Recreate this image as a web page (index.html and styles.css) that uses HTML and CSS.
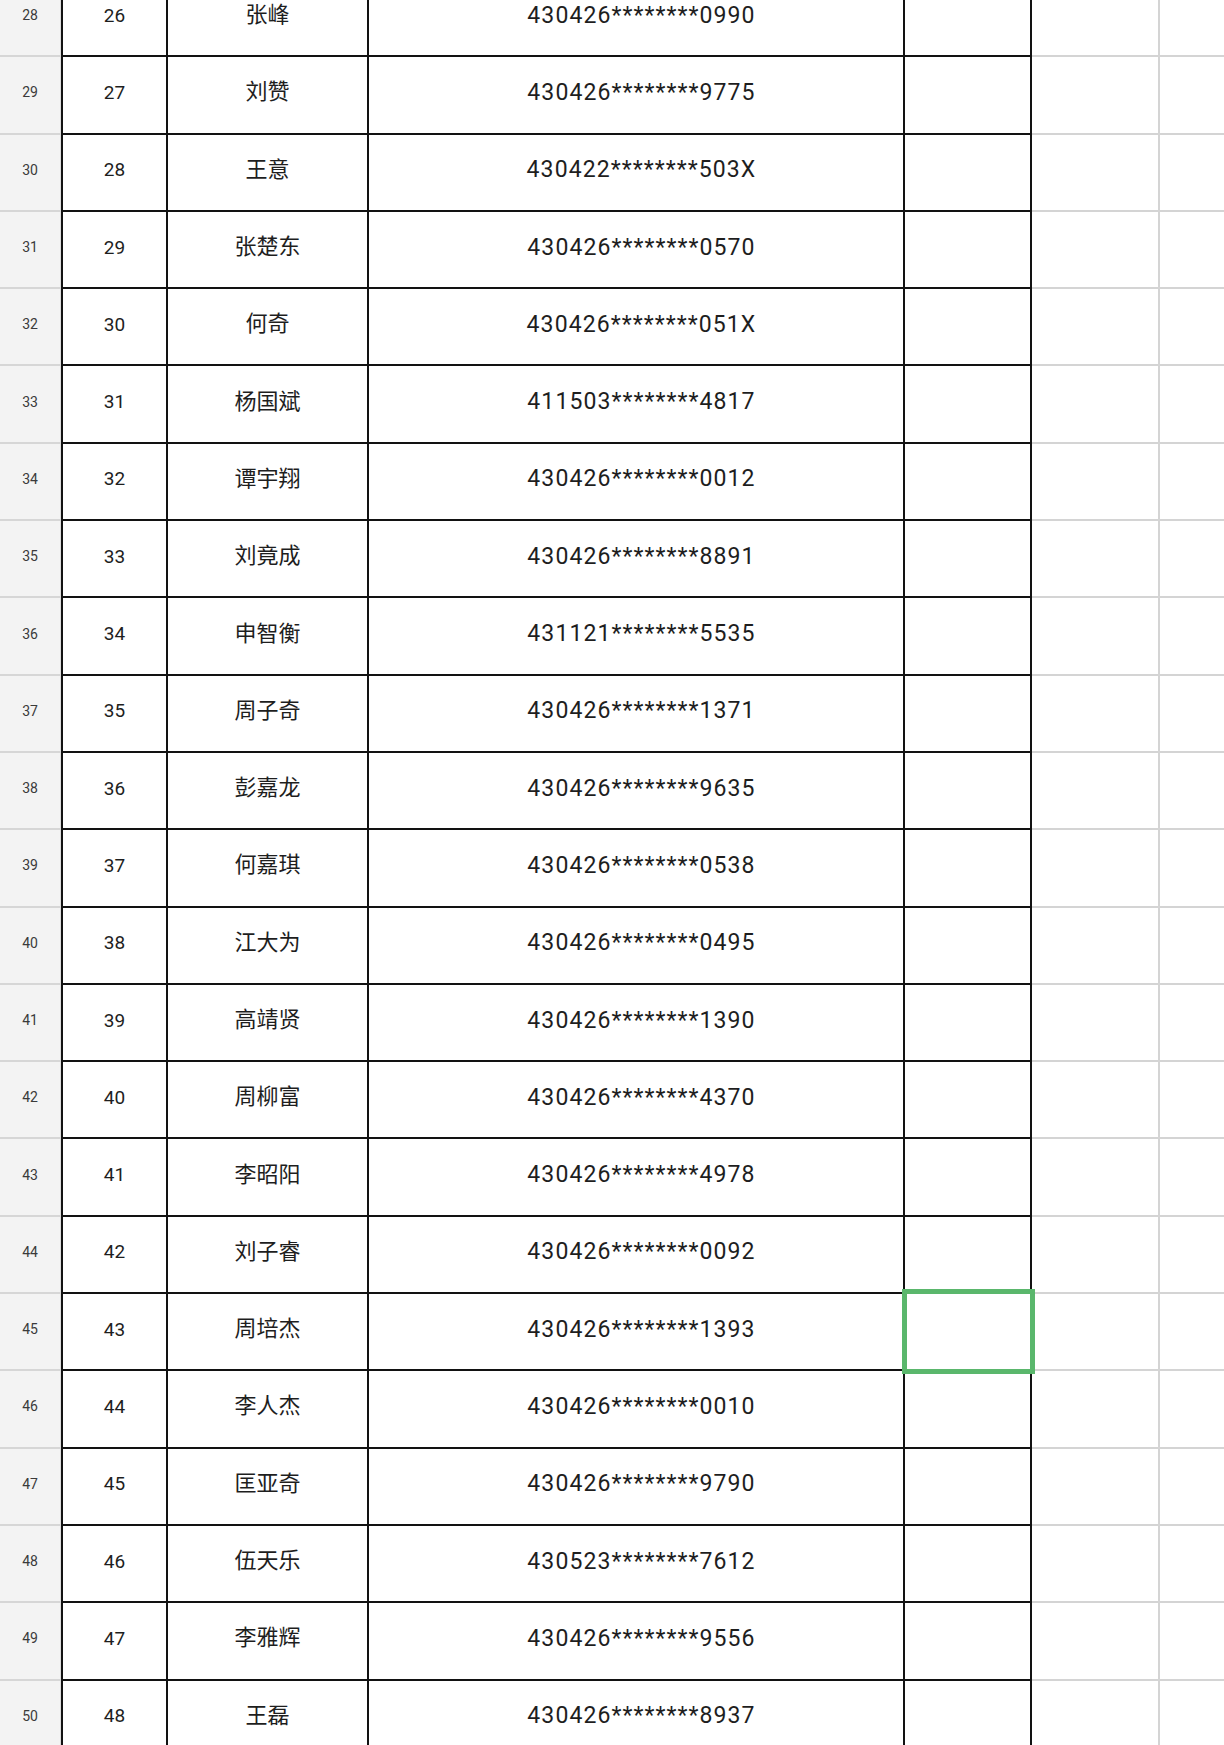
FILE: index.html
```html
<!DOCTYPE html>
<html lang="zh-CN">
<head>
<meta charset="utf-8">
<title>名单</title>
<link rel="stylesheet" href="styles.css">
</head>
<body>
<div class="sheet">
  <div class="row"><div class="rh">28</div><div class="c a">26</div><div class="c b">张峰</div><div class="c id">430426********0990</div><div class="c d"></div><div class="g e"></div><div class="g f"></div></div>
  <div class="row"><div class="rh">29</div><div class="c a">27</div><div class="c b">刘赞</div><div class="c id">430426********9775</div><div class="c d"></div><div class="g e"></div><div class="g f"></div></div>
  <div class="row"><div class="rh">30</div><div class="c a">28</div><div class="c b">王意</div><div class="c id">430422********503X</div><div class="c d"></div><div class="g e"></div><div class="g f"></div></div>
  <div class="row"><div class="rh">31</div><div class="c a">29</div><div class="c b">张楚东</div><div class="c id">430426********0570</div><div class="c d"></div><div class="g e"></div><div class="g f"></div></div>
  <div class="row"><div class="rh">32</div><div class="c a">30</div><div class="c b">何奇</div><div class="c id">430426********051X</div><div class="c d"></div><div class="g e"></div><div class="g f"></div></div>
  <div class="row"><div class="rh">33</div><div class="c a">31</div><div class="c b">杨国斌</div><div class="c id">411503********4817</div><div class="c d"></div><div class="g e"></div><div class="g f"></div></div>
  <div class="row"><div class="rh">34</div><div class="c a">32</div><div class="c b">谭宇翔</div><div class="c id">430426********0012</div><div class="c d"></div><div class="g e"></div><div class="g f"></div></div>
  <div class="row"><div class="rh">35</div><div class="c a">33</div><div class="c b">刘竟成</div><div class="c id">430426********8891</div><div class="c d"></div><div class="g e"></div><div class="g f"></div></div>
  <div class="row"><div class="rh">36</div><div class="c a">34</div><div class="c b">申智衡</div><div class="c id">431121********5535</div><div class="c d"></div><div class="g e"></div><div class="g f"></div></div>
  <div class="row"><div class="rh">37</div><div class="c a">35</div><div class="c b">周子奇</div><div class="c id">430426********1371</div><div class="c d"></div><div class="g e"></div><div class="g f"></div></div>
  <div class="row"><div class="rh">38</div><div class="c a">36</div><div class="c b">彭嘉龙</div><div class="c id">430426********9635</div><div class="c d"></div><div class="g e"></div><div class="g f"></div></div>
  <div class="row"><div class="rh">39</div><div class="c a">37</div><div class="c b">何嘉琪</div><div class="c id">430426********0538</div><div class="c d"></div><div class="g e"></div><div class="g f"></div></div>
  <div class="row"><div class="rh">40</div><div class="c a">38</div><div class="c b">江大为</div><div class="c id">430426********0495</div><div class="c d"></div><div class="g e"></div><div class="g f"></div></div>
  <div class="row"><div class="rh">41</div><div class="c a">39</div><div class="c b">高靖贤</div><div class="c id">430426********1390</div><div class="c d"></div><div class="g e"></div><div class="g f"></div></div>
  <div class="row"><div class="rh">42</div><div class="c a">40</div><div class="c b">周柳富</div><div class="c id">430426********4370</div><div class="c d"></div><div class="g e"></div><div class="g f"></div></div>
  <div class="row"><div class="rh">43</div><div class="c a">41</div><div class="c b">李昭阳</div><div class="c id">430426********4978</div><div class="c d"></div><div class="g e"></div><div class="g f"></div></div>
  <div class="row"><div class="rh">44</div><div class="c a">42</div><div class="c b">刘子睿</div><div class="c id">430426********0092</div><div class="c d"></div><div class="g e"></div><div class="g f"></div></div>
  <div class="row"><div class="rh">45</div><div class="c a">43</div><div class="c b">周培杰</div><div class="c id">430426********1393</div><div class="c d selected"><span class="sel"></span></div><div class="g e"></div><div class="g f"></div></div>
  <div class="row"><div class="rh">46</div><div class="c a">44</div><div class="c b">李人杰</div><div class="c id">430426********0010</div><div class="c d"></div><div class="g e"></div><div class="g f"></div></div>
  <div class="row"><div class="rh">47</div><div class="c a">45</div><div class="c b">匡亚奇</div><div class="c id">430426********9790</div><div class="c d"></div><div class="g e"></div><div class="g f"></div></div>
  <div class="row"><div class="rh">48</div><div class="c a">46</div><div class="c b">伍天乐</div><div class="c id">430523********7612</div><div class="c d"></div><div class="g e"></div><div class="g f"></div></div>
  <div class="row"><div class="rh">49</div><div class="c a">47</div><div class="c b">李雅辉</div><div class="c id">430426********9556</div><div class="c d"></div><div class="g e"></div><div class="g f"></div></div>
  <div class="row"><div class="rh">50</div><div class="c a">48</div><div class="c b">王磊</div><div class="c id">430426********8937</div><div class="c d"></div><div class="g e"></div><div class="g f"></div></div>
</div>
</body>
</html>
```

FILE: styles.css
```css
html, body {
  margin: 0;
  padding: 0;
  background: #ffffff;
  overflow: hidden;
}
body {
  width: 1224px;
  height: 1745px;
  font-family: Roboto, "Noto Sans CJK SC", sans-serif;
  color: #1e1e1e;
}
.sheet {
  margin-top: -20px;
  display: flex;
  flex-direction: column;
}
.row {
  display: grid;
  grid-template-columns: 61px 107px 201px 536px 127px 128px 1fr;
  height: 77.3px;
}
.row > div {
  box-sizing: border-box;
  display: flex;
  align-items: center;
  justify-content: center;
  padding-bottom: 5px;
}
.rh {
  background: #f3f3f3;
  border-bottom: 2px solid #d6d6d6;
  border-right: 1px solid #dcdcdc;
  font-size: 14px;
  color: #3a3a3a;
}
.c {
  border-right: 2px solid #121212;
  border-bottom: 2px solid #121212;
}
.c.a {
  border-left: 2px solid #121212;
  font-size: 19px;
}
.row > .c.b {
  font-family: "Noto Sans CJK SC", sans-serif;
  font-size: 22px;
  padding-bottom: 11px;
}
.c.id {
  font-size: 23px;
  letter-spacing: 1.1px;
  padding-left: 11px;
}
.g {
  border-bottom: 2px solid #d4d4d4;
}
.g.e {
  border-right: 2px solid #d4d4d4;
}
.selected {
  position: relative;
}
.sel {
  position: absolute;
  left: -3px;
  right: -5px;
  top: -5px;
  bottom: -5px;
  border: 5px solid #5ab76c;
}
```
